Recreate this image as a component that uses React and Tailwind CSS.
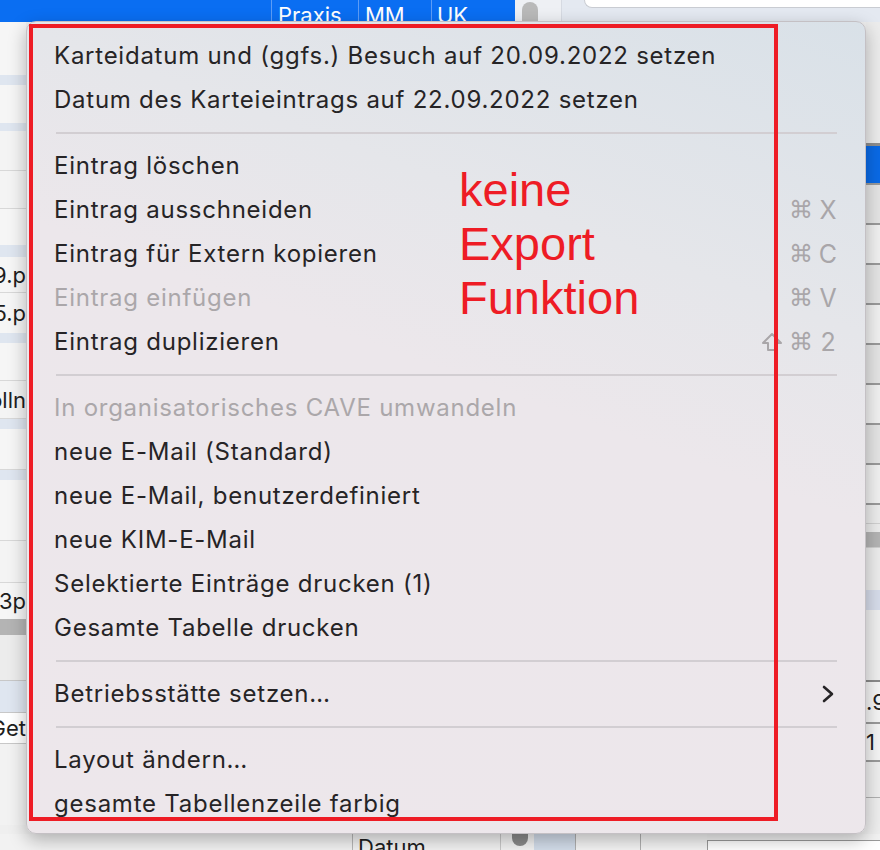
import React from 'react'

const MENU_FONT = { fontFamily: 'Inter, "Noto Sans", sans-serif' }

// menu rows, in order; 'sep' draws a divider
const ITEMS = [
  { label: 'Karteidatum und (ggfs.) Besuch auf 20.09.2022 setzen' },
  { label: 'Datum des Karteieintrags auf 22.09.2022 setzen' },
  'sep',
  { label: 'Eintrag löschen' },
  { label: 'Eintrag ausschneiden', keys: ['⌘', 'X'] },
  { label: 'Eintrag für Extern kopieren', keys: ['⌘', 'C'] },
  { label: 'Eintrag einfügen', keys: ['⌘', 'V'], disabled: true },
  { label: 'Eintrag duplizieren', keys: ['⌘', '2'], shift: true },
  'sep',
  { label: 'In organisatorisches CAVE umwandeln', disabled: true },
  { label: 'neue E-Mail (Standard)' },
  { label: 'neue E-Mail, benutzerdefiniert' },
  { label: 'neue KIM-E-Mail' },
  { label: 'Selektierte Einträge drucken (1)' },
  { label: 'Gesamte Tabelle drucken' },
  'sep',
  { label: 'Betriebsstätte setzen…', submenu: true },
  'sep',
  { label: 'Layout ändern…' },
  { label: 'gesamte Tabellenzeile farbig' },
]

// background table rows peeking out left and right of the menu
const LEFT_ROWS = [
  ['h-[53px] bg-[#f6f6f6]', ''],
  ['h-[10px] bg-[#dfe6f0]', ''],
  ['h-[38px] bg-[#f6f6f6]', ''],
  ['h-[8px] bg-[#dfe6f0]', ''],
  ['h-[40px] bg-[#f4f4f4] border-b border-[#d8d8d8]', ''],
  ['h-[38px] bg-[#f4f4f4] border-b border-[#d8d8d8]', ''],
  ['h-[36px] bg-[#f6f6f6]', ''],
  ['h-[12px] bg-[#dfe6f0]', ''],
  ['h-[36px] bg-[#f6f6f6] border-b border-[#d8d8d8]', '9.p'],
  ['h-[40px] bg-[#f6f6f6]', '5.p'],
  ['h-[10px] bg-[#dfe6f0]', ''],
  ['h-[38px] bg-[#f6f6f6] border-b border-[#d8d8d8]', ''],
  ['h-[38px] bg-[#f4f4f4] border-b border-[#d8d8d8]', 'olln'],
  ['h-[10px] bg-[#dfe6f0]', ''],
  ['h-[41px] bg-[#f6f6f6] border-b border-[#d8d8d8]', ''],
  ['h-[10px] bg-[#dfe6f0]', ''],
  ['h-[61px] bg-[#f6f6f6] border-b border-[#d8d8d8]', ''],
  ['h-[42px] bg-[#f4f4f4] border-b border-[#d8d8d8]', ''],
  ['h-[36px] bg-[#f6f6f6]', '3p'],
  ['h-[16px] bg-[#b4b4b4]', ''],
  ['h-[46px] bg-[#ececec] border-b border-[#c8c8c8]', ''],
  ['h-[31px] bg-[#dfe6f0]', ''],
  ['h-[32px] bg-[#ffffff] border-y border-[#c8c8c8]', 'Get'],
  ['h-[81px] bg-[#f2f2f2]', ''],
]

const RIGHT_ROWS = [
  ['h-[121px] bg-[#ececec]', ''],
  ['h-[3px] bg-[#8e8e8e]', ''],
  ['h-[37px] bg-[#0a6ae6]', ''],
  ['h-[40px] bg-[#e4e4e4] border-t-2 border-[#9a9a9a]', ''],
  ['h-[40px] bg-[#f0f0f0] border-t-2 border-[#9a9a9a]', ''],
  ['h-[40px] bg-[#e4e4e4] border-t-2 border-[#9a9a9a]', ''],
  ['h-[40px] bg-[#f0f0f0] border-t-2 border-[#9a9a9a]', ''],
  ['h-[40px] bg-[#e4e4e4] border-t-2 border-[#9a9a9a]', ''],
  ['h-[40px] bg-[#f0f0f0] border-t-2 border-[#9a9a9a]', ''],
  ['h-[40px] bg-[#e4e4e4] border-t-2 border-[#9a9a9a]', ''],
  ['h-[40px] bg-[#f0f0f0] border-t-2 border-[#9a9a9a]', ''],
  ['h-[20px] bg-[#ececec] border-t-2 border-[#9a9a9a]', ''],
  ['h-[9px] bg-[#ececec] border-t border-[#d0d0d0]', ''],
  ['h-[15px] bg-[#b4b4b4]', ''],
  ['h-[43px] bg-[#ececec] border-t border-[#d0d0d0]', ''],
  ['h-[20px] bg-[#d6dcea]', ''],
  ['h-[70px] bg-[#efefef]', ''],
  ['h-[42px] bg-[#f4f4f4] border-t-2 border-[#8a8a8a]', '.9'],
  ['h-[38px] bg-[#f4f4f4] border-t-2 border-[#9a9a9a]', '1'],
  ['h-[37px] bg-[#eeeeee] border-t-2 border-[#9a9a9a]', ''],
  ['h-[38px] bg-[#eeeeee] border-t border-[#b0b0b0]', ''],
]

function Keys({ keys, shift }) {
  return (
    <span className="ml-auto flex items-center gap-[5px] text-[#a9a6a9] text-[25px] leading-none tracking-normal">
      {shift && (
        <svg width="22" height="20" viewBox="0 0 22 20" className="mr-[1px]">
          <path d="M11 2 L20 11 H15 V18 H7 V11 H2 Z" fill="none" stroke="#a9a6a9" strokeWidth="2" strokeLinejoin="round" />
        </svg>
      )}
      <span style={{ fontFamily: '"DejaVu Sans", sans-serif' }} className="text-[24px]">{keys[0]}</span>
      <span className="w-[20px] text-center">{keys[1]}</span>
    </span>
  )
}

function MenuRow({ item }) {
  if (item === 'sep') {
    return (
      <div className="h-[22px] flex items-center ml-[29px] mr-[28px]">
        <div className="h-[2px] w-full bg-[#d2ced2]" />
      </div>
    )
  }
  return (
    <div className="h-[44px] flex items-center pl-[27px] pr-[27px]">
      <span className={item.disabled ? 'text-[#aba7aa]' : 'text-[#262426]'}>{item.label}</span>
      {item.keys && <Keys keys={item.keys} shift={item.shift} />}
      {item.submenu && (
        <svg width="14" height="18" viewBox="0 0 14 18" className="ml-auto mr-[3px]">
          <path d="M3 2 L11 9 L3 16" fill="none" stroke="#262426" strokeWidth="2.6" strokeLinecap="round" strokeLinejoin="round" />
        </svg>
      )}
    </div>
  )
}

function Strip({ rows, align }) {
  return (
    <div className="flex flex-col overflow-hidden h-full">
      {rows.map(([cls, text], i) => (
        <div key={i} className={`${cls} shrink-0 flex items-center overflow-hidden ${align}`}>
          {text && <span className="text-[22px] text-[#1e1e1e] whitespace-nowrap leading-none">{text}</span>}
        </div>
      ))}
    </div>
  )
}

export default function App() {
  return (
    <div className="relative w-[880px] h-[850px] overflow-hidden bg-[#efefef]" style={{ fontFamily: 'Inter, "Liberation Sans", sans-serif' }}>
      {/* top bar behind the menu */}
      <div className="flex h-[22px]">
        <div className="w-[515px] bg-[#0a6ef2] flex text-white text-[22px] leading-none overflow-hidden">
          <div className="w-[272px] border-r border-[#5c9cf6]" />
          <div className="w-[87px] border-r border-[#5c9cf6] pl-[6px] pt-[4px]">Praxis</div>
          <div className="w-[73px] border-r border-[#5c9cf6] pl-[6px] pt-[4px]">MM</div>
          <div className="pl-[5px] pt-[4px]">UK</div>
        </div>
        <div className="w-[47px] bg-[#eef0f4] border-r border-[#d6dae2] pl-[7px]">
          <div className="w-[16px] h-[20px] mt-[2px] rounded-t-full bg-[#b9b9b9]" />
        </div>
        <div className="flex-1 bg-[#e4e9f1] flex flex-col">
          <div className="h-[8px] ml-[22px] bg-white rounded-bl-[8px] border-b border-l border-[#c9ccd2]" />
        </div>
      </div>

      {/* sides */}
      <div className="flex h-[812px]">
        <div className="w-[26px]">
          <Strip rows={LEFT_ROWS} align="justify-end" />
        </div>
        <div className="flex-1" />
        <div className="w-[14px]">
          <Strip rows={RIGHT_ROWS} align="justify-start" />
        </div>
      </div>

      {/* bottom strip */}
      <div className="flex h-[16px] bg-[#f2f2f2]">
        <div className="w-[352px]" />
        <div className="w-[148px] border-l border-[#b8b8b8] pl-[5px] text-[22px] leading-none text-[#1e1e1e] pt-[2px]">Datum</div>
        <div className="w-[34px] border-l border-[#c8c8c8] pl-[11px]">
          <div className="w-[16px] h-[14px] -mt-[2px] rounded-b-full bg-[#8a8a8a]" />
        </div>
        <div className="w-[41px] bg-[#d3ddea]" />
        <div className="w-[65px] border-l border-[#b0b0b0] bg-[#f4f4f4]" />
        <div className="w-[67px] border-l border-[#b0b0b0] bg-[#f4f4f4]" />
        <div className="flex-1 mt-[6px] border-l border-t border-[#9a9a9a] bg-white" />
      </div>

      {/* context menu overlay */}
      <div
        className="absolute left-[26px] top-[21px] w-[840px] h-[813px] rounded-[10px] border border-[#c4c0c4] shadow-[0_6px_18px_rgba(0,0,0,0.28)] bg-[linear-gradient(200deg,#d9e1e8_0%,#e5e6ea_28%,#ece7eb_45%,#ede7eb_100%)] pt-[12px] text-[24px] tracking-[0.75px] leading-none"
        style={MENU_FONT}
      >
        {ITEMS.map((item, i) => <MenuRow key={i} item={item} />)}
      </div>

      {/* red annotation */}
      <div className="absolute left-[29px] top-[24px] w-[749px] h-[797px] border-4 border-[#ee1c25]" />
      <div
        className="absolute left-[459px] top-[163px] text-[#ee1c25] text-[47px] leading-[54px]"
        style={{ fontFamily: '"Liberation Sans", Arial, sans-serif' }}
      >
        keine<br />Export<br />Funktion
      </div>
    </div>
  )
}
